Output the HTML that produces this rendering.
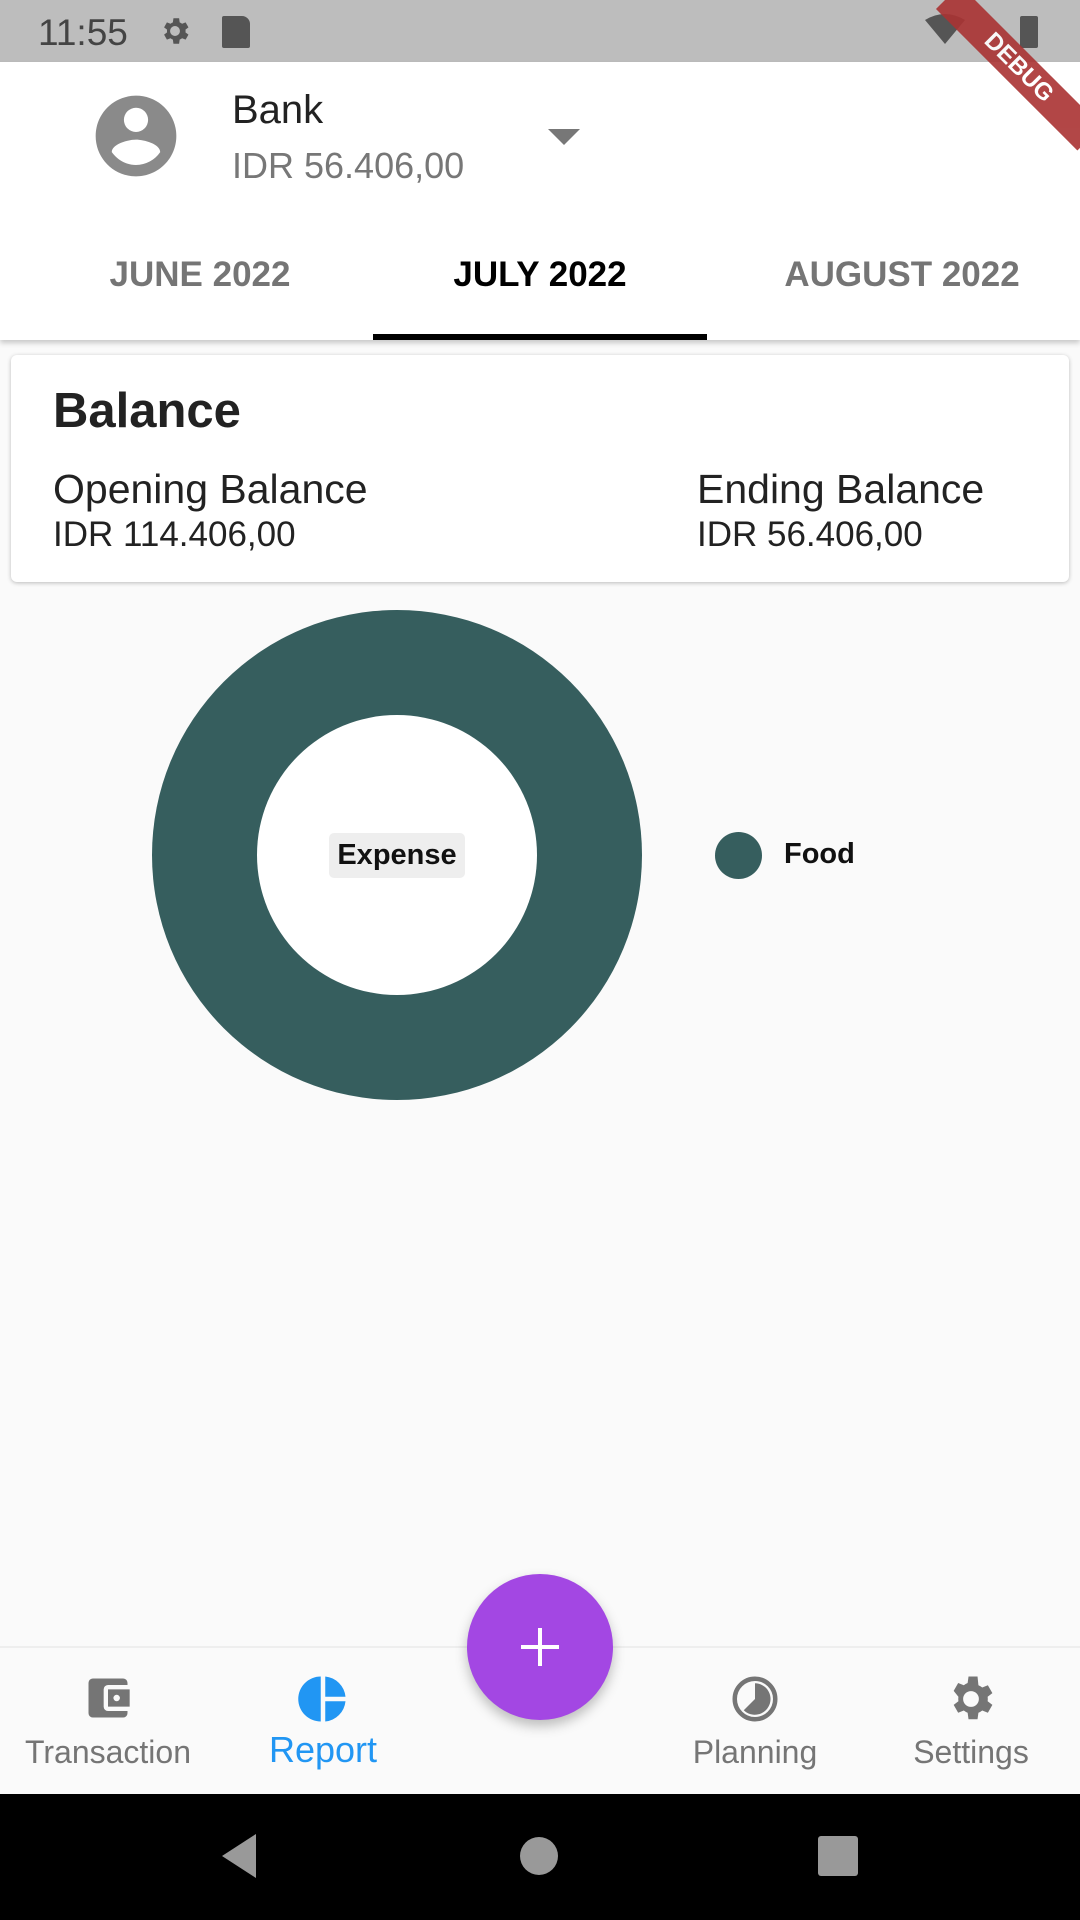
<!DOCTYPE html>
<html><head><meta charset="utf-8"><style>
*{margin:0;padding:0;box-sizing:border-box}
body{width:1080px;height:1920px;background:#fafafa;font-family:"Liberation Sans",sans-serif;position:relative;overflow:hidden}
.a{position:absolute;white-space:nowrap}
</style></head><body>
<div class="a" style="left:0;top:0;width:1080px;height:62px;background:#bdbdbd"></div>
<div class="a" style="left:38px;top:12px;font-size:37px;color:#444">11:55</div>
<svg class="a" style="left:158px;top:14px" width="34" height="34" viewBox="0 0 24 24"><path fill="#555" d="M19.4 13a7.5 7.5 0 000-2l2.1-1.6-2-3.5-2.5 1a7 7 0 00-1.7-1L14.9 3h-4l-.4 2.9a7 7 0 00-1.7 1l-2.5-1-2 3.5L6.4 11a7.5 7.5 0 000 2l-2.1 1.6 2 3.5 2.5-1a7 7 0 001.7 1l.4 2.9h4l.4-2.9a7 7 0 001.7-1l2.5 1 2-3.5zM12 15.5a3.5 3.5 0 110-7 3.5 3.5 0 010 7z"/></svg>
<div class="a" style="left:222px;top:16px;width:28px;height:32px;background:#555;border-radius:2px 8px 2px 2px"></div>
<svg class="a" style="left:925px;top:14px" width="40" height="32" viewBox="0 0 40 32"><path fill="#555" d="M0 6Q20-6 40 6L20 30Z"/></svg>
<div class="a" style="left:1020px;top:16px;width:18px;height:32px;background:#555;border-radius:2px"></div>
<div class="a" style="left:0;top:62px;width:1080px;height:278px;background:#fff;box-shadow:0 3px 5px rgba(0,0,0,.2)"></div>
<div class="a" style="left:960px;top:-15px;width:200px;height:34px;background:#a33;transform:rotate(45deg);transform-origin:0 0;color:#fff;font-weight:bold;font-size:24px;text-align:center;line-height:34px;opacity:.9">DEBUG</div>
<svg class="a" style="left:92px;top:92px" width="88" height="88" viewBox="0 0 24 24"><path fill="#8a8a8a" d="M12 1C5.9 1 1 5.9 1 12s4.9 11 11 11 11-4.9 11-11S18.1 1 12 1zm0 3.3a3.3 3.3 0 110 6.6 3.3 3.3 0 010-6.6zm0 15.6c-2.7 0-5.1-1.4-6.6-3.5 0-2.2 4.4-3.4 6.6-3.4s6.6 1.2 6.6 3.4a8 8 0 01-6.6 3.5z"/></svg>
<div class="a" style="left:232px;top:88px;font-size:40px;color:#222">Bank</div>
<div class="a" style="left:232px;top:145px;font-size:36px;color:#777">IDR 56.406,00</div>
<div class="a" style="left:548px;top:129px;border-left:16px solid transparent;border-right:16px solid transparent;border-top:16px solid #777"></div>
<div class="a" style="left:0;top:255px;width:400px;text-align:center;font-size:35px;color:#757575;font-weight:bold">JUNE 2022</div>
<div class="a" style="left:340px;top:255px;width:400px;text-align:center;font-size:35px;color:#000;font-weight:bold">JULY 2022</div>
<div class="a" style="left:702px;top:255px;width:400px;text-align:center;font-size:35px;color:#757575;font-weight:bold">AUGUST 2022</div>
<div class="a" style="left:373px;top:334px;width:334px;height:6px;background:#000"></div>
<div class="a" style="left:11px;top:355px;width:1058px;height:227px;background:#fff;border-radius:6px;box-shadow:0 1px 4px rgba(0,0,0,.25)"></div>
<div class="a" style="left:53px;top:383px;font-size:49px;color:#222;font-weight:bold">Balance</div>
<div class="a" style="left:53px;top:466px;font-size:41px;color:#222">Opening Balance</div>
<div class="a" style="left:53px;top:515px;font-size:35px;color:#222">IDR 114.406,00</div>
<div class="a" style="left:697px;top:466px;font-size:41px;color:#222">Ending Balance</div>
<div class="a" style="left:697px;top:515px;font-size:35px;color:#222">IDR 56.406,00</div>
<div class="a" style="left:152px;top:610px;width:490px;height:490px;border-radius:50%;background:#365e5e"></div>
<div class="a" style="left:257px;top:715px;width:280px;height:280px;border-radius:50%;background:#fff"></div>
<div class="a" style="left:329px;top:833px;width:136px;height:45px;background:#eee;border-radius:5px;font-size:29px;font-weight:bold;color:#111;text-align:center;line-height:45px">Expense</div>
<div class="a" style="left:715px;top:832px;width:47px;height:47px;border-radius:50%;background:#365e5e"></div>
<div class="a" style="left:784px;top:838px;font-size:29px;font-weight:bold;color:#111">Food</div>
<div class="a" style="left:0;top:1646px;width:1080px;height:148px;background:#fafafa;border-top:2px solid #eee"></div>
<svg class="a" style="left:82px;top:1672px" width="52" height="52" viewBox="0 0 24 24"><path fill="#757575" d="M21 18v1a2 2 0 01-2 2H5a2 2 0 01-2-2V5a2 2 0 012-2h14a2 2 0 012 2v1h-9a2 2 0 00-2 2v8a2 2 0 002 2h9zm-9-2h10V8H12v8zm4-2.5a1.5 1.5 0 110-3 1.5 1.5 0 010 3z"/></svg>
<div class="a" style="left:8px;top:1734px;width:200px;text-align:center;font-size:32px;color:#757575">Transaction</div>
<svg class="a" style="left:296px;top:1672px" width="54" height="54" viewBox="0 0 24 24"><path fill="#2196f3" d="M11 2v20a10 10 0 010-20zm2 0v9h9a10 10 0 00-9-9zm0 11v9a10 10 0 009-9h-9z"/></svg>
<div class="a" style="left:223px;top:1729px;width:200px;text-align:center;font-size:36px;color:#2196f3">Report</div>
<svg class="a" style="left:728px;top:1672px" width="54" height="54" viewBox="0 0 24 24"><circle cx="12" cy="12" r="9" fill="none" stroke="#757575" stroke-width="2"/><path fill="#757575" d="M12 5a7 7 0 11-5 12l5-5z"/></svg>
<div class="a" style="left:655px;top:1734px;width:200px;text-align:center;font-size:32px;color:#757575">Planning</div>
<svg class="a" style="left:944px;top:1672px" width="54" height="54" viewBox="0 0 24 24"><path fill="#757575" d="M19.4 13a7.5 7.5 0 000-2l2.1-1.6-2-3.5-2.5 1a7 7 0 00-1.7-1L14.9 2h-4l-.4 2.9a7 7 0 00-1.7 1l-2.5-1-2 3.5L6.4 11a7.5 7.5 0 000 2l-2.1 1.6 2 3.5 2.5-1a7 7 0 001.7 1l.4 2.9h4l.4-2.9a7 7 0 001.7-1l2.5 1 2-3.5zM12 15.5a3.5 3.5 0 110-7 3.5 3.5 0 010 7z"/></svg>
<div class="a" style="left:871px;top:1734px;width:200px;text-align:center;font-size:32px;color:#757575">Settings</div>
<div class="a" style="left:467px;top:1574px;width:146px;height:146px;border-radius:50%;background:#a347e3;box-shadow:0 6px 12px rgba(0,0,0,.25)"></div>
<div class="a" style="left:521px;top:1645px;width:38px;height:4px;background:#fff"></div>
<div class="a" style="left:538px;top:1628px;width:4px;height:38px;background:#fff"></div>
<div class="a" style="left:0;top:1794px;width:1080px;height:126px;background:#000"></div>
<svg class="a" style="left:218px;top:1832px" width="40" height="48" viewBox="0 0 40 48"><path fill="#999" d="M38 2L4 24l34 22z"/></svg>
<div class="a" style="left:520px;top:1837px;width:38px;height:38px;border-radius:50%;background:#999"></div>
<div class="a" style="left:818px;top:1836px;width:40px;height:40px;border-radius:3px;background:#999"></div>
</body></html>
